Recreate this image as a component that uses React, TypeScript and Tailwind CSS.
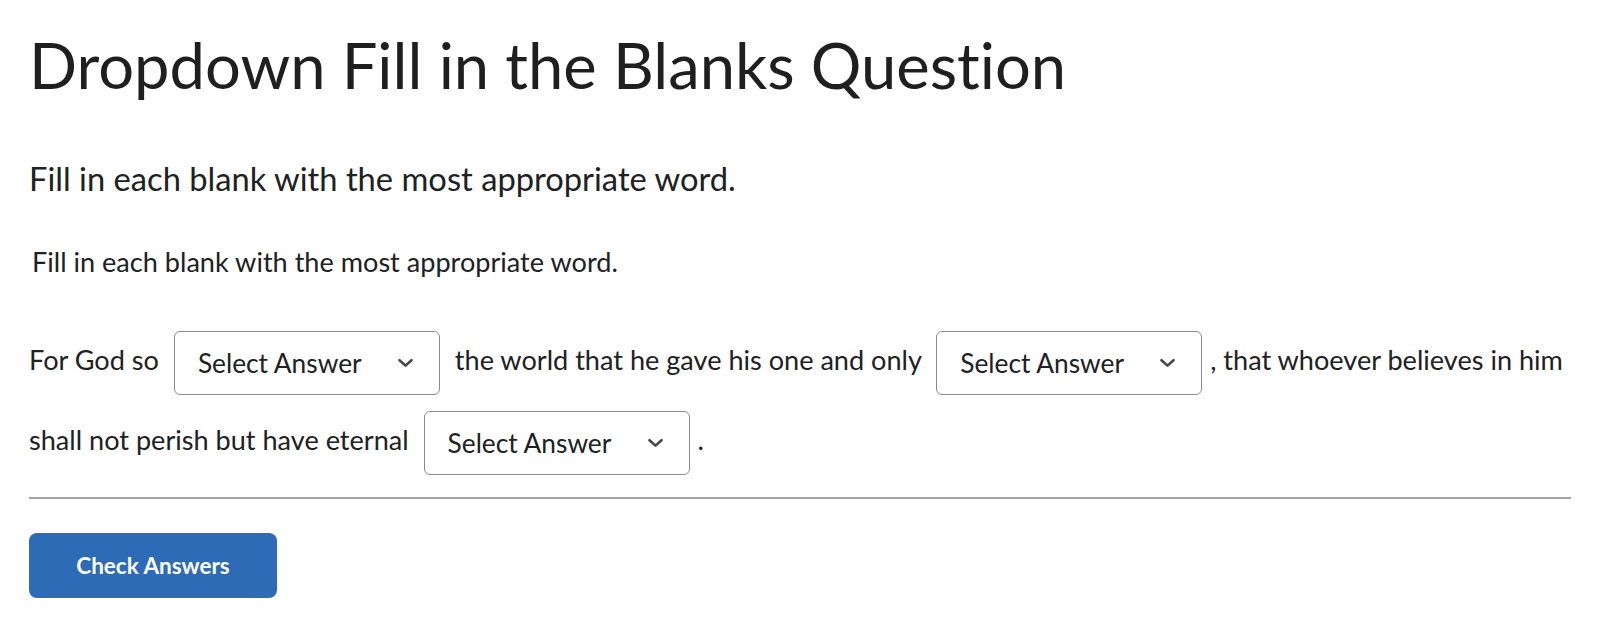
import { ReactNode } from "react";

function Chevron() {
  return (
    <svg width="17" height="10" viewBox="0 0 17 10" fill="none" className="shrink-0">
      <path d="M2.5 2.2 L8.5 7.6 L14.5 2.2" stroke="#454545" strokeWidth="2.6" strokeLinecap="round" strokeLinejoin="round" />
    </svg>
  );
}

function Blank() {
  return (
    <span className="mx-[8px] inline-flex h-[64px] w-[266px] items-center justify-between rounded-[6px] border border-[#8c8c8c] bg-white pl-[23px] pr-[25px] align-middle text-[26.3px] leading-none text-[#202122]">
      <span>Select Answer</span>
      <Chevron />
    </span>
  );
}

function Line({ children }: { children: ReactNode }) {
  return <p className="text-[27.1px] leading-[80px] text-[#202122]">{children}</p>;
}

export default function App() {
  return (
    <div className="min-h-screen bg-white px-[29px] pt-[27px] font-['Lato','Noto_Sans',sans-serif] text-[#202122] [font-variant-ligatures:none]">
      <h1 className="text-[63.3px] font-normal leading-[1.2] text-[#1f1f1f]">
        Dropdown Fill in the Blanks Question
      </h1>

      <h2 className="mt-[56px] text-[32.7px] leading-[39px]">
        Fill in each blank with the most appropriate word.
      </h2>

      <div className="mt-[48px] pl-[3px] text-[27.1px] leading-[32px]">
        Fill in each blank with the most appropriate word.
      </div>

      <div className="mt-[42px]">
        <Line>
          For God so <Blank /> the world that he gave his one and only <Blank />, that whoever
          believes in him shall not perish but have eternal <Blank />.
        </Line>
      </div>

      <div className="mt-[17px] border-t-2 border-[#a3a3a3]" />

      <button className="mt-[34px] h-[65px] w-[248px] rounded-[8px] bg-[#2d6bb6] text-[22.5px] font-bold text-white">
        Check Answers
      </button>
    </div>
  );
}
